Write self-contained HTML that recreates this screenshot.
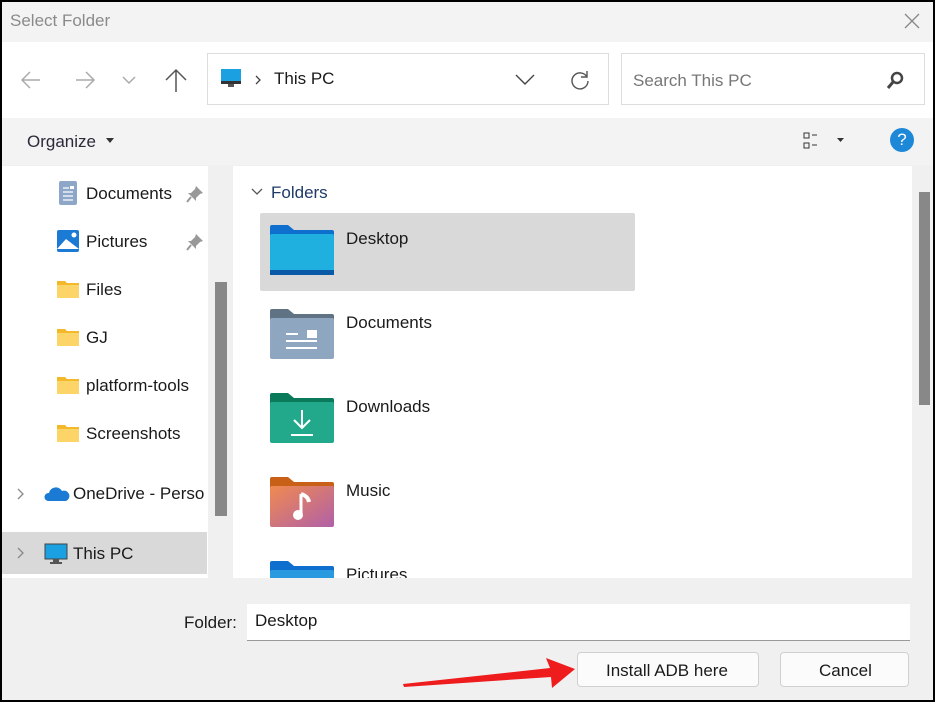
<!DOCTYPE html>
<html><head><meta charset="utf-8"><style>
*{margin:0;padding:0;box-sizing:border-box}
body{width:935px;height:702px;background:#000;position:relative;overflow:hidden;font-family:"Liberation Sans",sans-serif;color:#1a1a1a}
.a{position:absolute}
.t{font-size:17px;white-space:nowrap}
</style></head><body>
<div class="a" style="left:2px;top:2px;width:931px;height:698px;background:#f0f0f0"></div>
<div class="a" style="left:2px;top:2px;width:931px;height:40px;background:#f3f3f3"></div>
<div class="a t" style="left:10px;top:11px;color:#8a8a8a;font-size:17px">Select Folder</div>
<svg class="a" style="left:903px;top:12px" width="18" height="18"><path d="M2 2L16 16M16 2L2 16" stroke="#888" stroke-width="1.3"/></svg>
<div class="a" style="left:2px;top:42px;width:931px;height:76px;background:#fff"></div>
<svg class="a" style="left:20px;top:68px" width="170" height="26" fill="none" stroke-width="1.5">
<path d="M2 12H20M10 4L2 12L10 20" stroke="#aaa"/>
<path d="M56 12H74M66 4L74 12L66 20" stroke="#aaa"/>
<path d="M103 9L109 15L115 9" stroke="#aaa"/>
<path d="M156 2V24M146 12L156 2L166 12" stroke="#555"/>
</svg>
<div class="a" style="left:207px;top:53px;width:402px;height:52px;border:1px solid #ddd;background:#fff"></div>
<svg class="a" style="left:220px;top:69px" width="22" height="20"><rect x="1" y="0" width="20" height="14" fill="#1ba1e2"/><rect x="1" y="12" width="20" height="3" fill="#333"/><rect x="8" y="15" width="6" height="3" fill="#555"/></svg>
<svg class="a" style="left:254px;top:74px" width="8" height="12"><path d="M2 2L6 6L2 10" stroke="#444" fill="none" stroke-width="1.3"/></svg>
<div class="a t" style="left:274px;top:69px">This PC</div>
<svg class="a" style="left:514px;top:72px" width="22" height="14"><path d="M2 3L11 12L20 3" stroke="#444" fill="none" stroke-width="1.4"/></svg>
<svg class="a" style="left:568px;top:68px" width="24" height="24"><path d="M19 9A8 8 0 1 0 20 13" stroke="#555" fill="none" stroke-width="1.4"/><path d="M19 3V9H13" stroke="#555" fill="none" stroke-width="1.4"/></svg>
<div class="a" style="left:621px;top:53px;width:304px;height:52px;border:1px solid #ddd;background:#fff"></div>
<div class="a t" style="left:633px;top:71px;color:#777">Search This PC</div>
<svg class="a" style="left:885px;top:71px" width="20" height="20"><circle cx="12" cy="7" r="5" stroke="#444" stroke-width="2.5" fill="none"/><path d="M8 11L3 17" stroke="#444" stroke-width="3"/></svg>
<div class="a" style="left:2px;top:118px;width:931px;height:47px;background:#f3f3f3"></div>
<div class="a t" style="left:27px;top:132px;color:#2a2a3a">Organize</div>
<svg class="a" style="left:105px;top:137px" width="10" height="8"><path d="M1 1H9L5 6Z" fill="#333"/></svg>
<svg class="a" style="left:803px;top:130px" width="44" height="22"><rect x="1" y="3" width="5" height="5" stroke="#333" fill="none"/><rect x="1" y="13" width="5" height="5" stroke="#333" fill="none"/><path d="M9 5H14M9 15H14" stroke="#333"/><path d="M34 8H41L37.5 12Z" fill="#333"/></svg>
<div class="a" style="left:890px;top:128px;width:24px;height:24px;border-radius:50%;background:#1e88d8;color:#fff;font-size:17px;text-align:center;line-height:24px">?</div>
<div class="a" style="left:2px;top:166px;width:206px;height:412px;background:#fff"></div>
<div class="a" style="left:215px;top:282px;width:12px;height:234px;background:#888"></div>
<div class="a" style="left:2px;top:532px;width:205px;height:42px;background:#d9d9d9"></div>
<svg class="a" style="left:56px;top:180px" width="24" height="26"><rect x="3" y="1" width="18" height="24" rx="2" fill="#8ea6c8"/><path d="M7 8H13M7 12H17M7 16H17M7 20H17" stroke="#fff" stroke-width="1.3"/><rect x="14" y="6" width="4" height="3" fill="#fff"/></svg>
<div class="a t" style="left:86px;top:184px">Documents</div>
<svg class="a" style="left:186px;top:185px" width="18" height="18"><path d="M10 1L17 8L14 9L10 13L10 16L2 8L5 8L9 4Z" fill="#999"/><path d="M5 12L1 17" stroke="#999" stroke-width="2"/></svg>
<svg class="a" style="left:56px;top:229px" width="24" height="24"><rect x="1" y="1" width="22" height="22" rx="2" fill="#1a7ad4"/><path d="M1 20L10 10L23 20Z" fill="#fff"/><circle cx="18" cy="6" r="2.5" fill="#fff"/></svg>
<div class="a t" style="left:86px;top:232px">Pictures</div>
<svg class="a" style="left:186px;top:233px" width="18" height="18"><path d="M10 1L17 8L14 9L10 13L10 16L2 8L5 8L9 4Z" fill="#999"/><path d="M5 12L1 17" stroke="#999" stroke-width="2"/></svg>
<svg class="a" style="left:56px;top:280px" width="24" height="20"><path d="M1 1H9L11 3H23V18H1Z" fill="#f3b92a"/><rect x="1" y="5" width="22" height="13" fill="#fcd468"/></svg>
<div class="a t" style="left:86px;top:280px">Files</div>
<svg class="a" style="left:56px;top:328px" width="24" height="20"><path d="M1 1H9L11 3H23V18H1Z" fill="#f3b92a"/><rect x="1" y="5" width="22" height="13" fill="#fcd468"/></svg>
<div class="a t" style="left:86px;top:328px">GJ</div>
<svg class="a" style="left:56px;top:376px" width="24" height="20"><path d="M1 1H9L11 3H23V18H1Z" fill="#f3b92a"/><rect x="1" y="5" width="22" height="13" fill="#fcd468"/></svg>
<div class="a t" style="left:86px;top:376px">platform-tools</div>
<svg class="a" style="left:56px;top:424px" width="24" height="20"><path d="M1 1H9L11 3H23V18H1Z" fill="#f3b92a"/><rect x="1" y="5" width="22" height="13" fill="#fcd468"/></svg>
<div class="a t" style="left:86px;top:424px">Screenshots</div>
<svg class="a" style="left:16px;top:487px" width="10" height="14"><path d="M2 2L7 7L2 12" stroke="#888" fill="none" stroke-width="1.3"/></svg>
<svg class="a" style="left:44px;top:484px" width="26" height="18"><path d="M4 17A4 4 0 0 1 5 9A7 7 0 0 1 18 7A5 5 0 0 1 22 17Z" fill="#1a7ad4"/></svg>
<div class="a t" style="left:73px;top:484px">OneDrive - Perso</div>
<svg class="a" style="left:16px;top:546px" width="10" height="14"><path d="M2 2L7 7L2 12" stroke="#888" fill="none" stroke-width="1.3"/></svg>
<svg class="a" style="left:44px;top:543px" width="24" height="22"><rect x="1" y="1" width="22" height="15" fill="#1ba1e2" stroke="#444"/><rect x="9" y="16" width="6" height="3" fill="#555"/><rect x="6" y="19" width="12" height="2" fill="#555"/></svg>
<div class="a t" style="left:73px;top:544px">This PC</div>
<div class="a" style="left:233px;top:166px;width:679px;height:412px;background:#fff;overflow:hidden">
<svg class="a" style="left:18px;top:21px" width="12" height="10"><path d="M1 2L6 7L11 2" stroke="#555" fill="none" stroke-width="1.3"/></svg>
<div class="a t" style="left:38px;top:17px;color:#1f3a6a">Folders</div>
<div class="a" style="left:27px;top:47px;width:375px;height:78px;background:#d9d9d9;border-radius:2px"></div>
<svg class="a" style="left:37px;top:59px" width="64" height="52"><path d="M0 2Q0 0 2 0H18L24 5H62Q64 5 64 7V20H0Z" fill="#0f6fcf"/><rect x="0" y="9" width="64" height="41" rx="2" fill="#1fb0e0"/><rect x="0" y="45" width="64" height="5" fill="#0a5aa8"/></svg>
<div class="a t" style="left:113px;top:63px">Desktop</div>
<svg class="a" style="left:37px;top:143px" width="64" height="52"><path d="M0 2Q0 0 2 0H18L24 5H62Q64 5 64 7V20H0Z" fill="#5f7384"/><rect x="0" y="9" width="64" height="41" rx="2" fill="#8fa6c0"/><path d="M16 25H28M16 32H47M16 39H47" stroke="#fff" stroke-width="2"/><rect x="37" y="21" width="10" height="8" fill="#fff"/></svg>
<div class="a t" style="left:113px;top:147px">Documents</div>
<svg class="a" style="left:37px;top:227px" width="64" height="52"><path d="M0 2Q0 0 2 0H18L24 5H62Q64 5 64 7V20H0Z" fill="#0b7a5a"/><rect x="0" y="9" width="64" height="41" rx="2" fill="#22a98c"/><path d="M32 17V35M24 27L32 35L40 27M21 42H43" stroke="#fff" stroke-width="2" fill="none"/></svg>
<div class="a t" style="left:113px;top:231px">Downloads</div>
<svg class="a" style="left:37px;top:311px" width="64" height="52"><defs><linearGradient id="m" x1="0" y1="0" x2="1" y2="1"><stop offset="0" stop-color="#f08a50"/><stop offset="1" stop-color="#b060a8"/></linearGradient></defs><path d="M0 2Q0 0 2 0H18L24 5H62Q64 5 64 7V20H0Z" fill="#c86018"/><rect x="0" y="9" width="64" height="41" rx="2" fill="url(#m)"/><path d="M31 17V38" stroke="#fff" stroke-width="3"/><circle cx="28" cy="38" r="5" fill="#fff"/><path d="M31 17Q38 19 39 25" stroke="#fff" stroke-width="4" fill="none"/></svg>
<div class="a t" style="left:113px;top:315px">Music</div>
<svg class="a" style="left:37px;top:395px" width="64" height="52"><path d="M0 2Q0 0 2 0H18L24 5H62Q64 5 64 7V20H0Z" fill="#0f6fcf"/><rect x="0" y="9" width="64" height="41" rx="2" fill="#2a9ae0"/></svg>
<div class="a t" style="left:113px;top:399px">Pictures</div>
</div>
<div class="a" style="left:919px;top:192px;width:11px;height:213px;background:#888"></div>
<div class="a t" style="left:184px;top:613px">Folder:</div>
<div class="a" style="left:247px;top:604px;width:663px;height:37px;background:#fff;border-bottom:1px solid #999"></div>
<div class="a t" style="left:255px;top:611px">Desktop</div>
<div class="a" style="left:577px;top:652px;width:182px;height:35px;background:#fbfbfb;border:1px solid #d0d0d0;border-radius:4px"></div>
<div class="a t" style="left:606px;top:661px">Install ADB here</div>
<div class="a" style="left:780px;top:652px;width:129px;height:35px;background:#fbfbfb;border:1px solid #d0d0d0;border-radius:4px"></div>
<div class="a t" style="left:819px;top:661px">Cancel</div>
<svg class="a" style="left:400px;top:652px" width="180" height="40"><path d="M3 32L150 16L146 6L175 17L152 36L151 25L4 35Z" fill="#ee1c1c"/></svg>
</body></html>
